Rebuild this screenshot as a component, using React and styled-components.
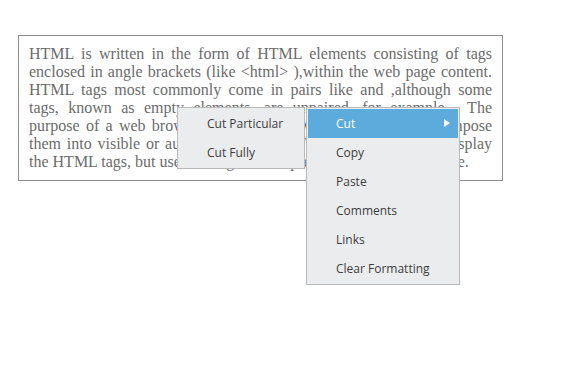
import styled, { createGlobalStyle } from "styled-components";

const GlobalStyle = createGlobalStyle`
  html, body {
    margin: 0;
    padding: 0;
    background: #ffffff;
  }
`

const PageStyled = styled.div`
  position: relative;
  width: 566px;
  height: 367px;
  padding: 35px 0 0 18px;
  box-sizing: border-box;
`
const ContentStyled = styled.div`
  width: 485px;
  box-sizing: border-box;
  border: 1px solid #8c8c8c;
  padding: 9px 10px 9px 10px;
  font-family: "Liberation Serif", "Times New Roman", serif;
  font-size: 16px;
  line-height: 18px;
  color: #6b6b6b;
`
const LineStyled = styled.span`
  display: block;
  white-space: nowrap;
  text-align: ${(p) => (p.$last ? "left" : "justify")};
  text-align-last: ${(p) => (p.$last ? "left" : "justify")};
`
const MenuStyled = styled.ul`
  position: absolute;
  left: ${(p) => p.$left}px;
  top: ${(p) => p.$top}px;
  width: ${(p) => p.$width}px;
  margin: 0;
  padding: 1px;
  list-style: none;
  box-sizing: border-box;
  background: #ebeced;
  border: 1px solid #b9b9b9;
  font-family: "Open Sans", "Noto Sans", sans-serif;
  font-size: 12px;
`
const ItemStyled = styled.li`
  position: relative;
  display: flex;
  align-items: center;
  height: 29px;
  padding-left: 28px;
  color: ${(p) => (p.$active ? "#ffffff" : "#3d3d3d")};
  background: ${(p) => (p.$active ? "#5dabdc" : "transparent")};
`
const ArrowStyled = styled.span`
  position: absolute;
  right: 8px;
  top: 10px;
  width: 0;
  height: 0;
  border-top: 4px solid transparent;
  border-bottom: 4px solid transparent;
  border-left: 6px solid #ffffff;
`

const lines = [
    "HTML is written in the form of HTML elements consisting of tags",
    "enclosed in angle brackets (like <html> ),within the web page content.",
    "HTML tags most commonly come in pairs like and ,although some",
    "tags, known as empty elements, are unpaired, for example . The",
    "purpose of a web browser is to read HTML documents and compose",
    "them into visible or audible web pages. The browser does not display",
    "the HTML tags, but uses the tags to interpret the content of the page.",
]
const mainItems = ["Cut", "Copy", "Paste", "Comments", "Links", "Clear Formatting"]
const subItems = ["Cut Particular", "Cut Fully"]

export default function App() {
    return (
        <PageStyled>
            <GlobalStyle/>
            <ContentStyled>
                {lines.map((line, i) => (
                    <LineStyled key={i} $last={i === lines.length - 1}>{line}</LineStyled>
                ))}
            </ContentStyled>

            <MenuStyled $left={177} $top={107} $width={128}>
                {subItems.map((item) => (
                    <ItemStyled key={item}>{item}</ItemStyled>
                ))}
            </MenuStyled>

            <MenuStyled $left={306} $top={107} $width={154}>
                {mainItems.map((item, i) => (
                    <ItemStyled key={item} $active={i === 0}>
                        {item}
                        {i === 0 && <ArrowStyled/>}
                    </ItemStyled>
                ))}
            </MenuStyled>
        </PageStyled>
    )
}
